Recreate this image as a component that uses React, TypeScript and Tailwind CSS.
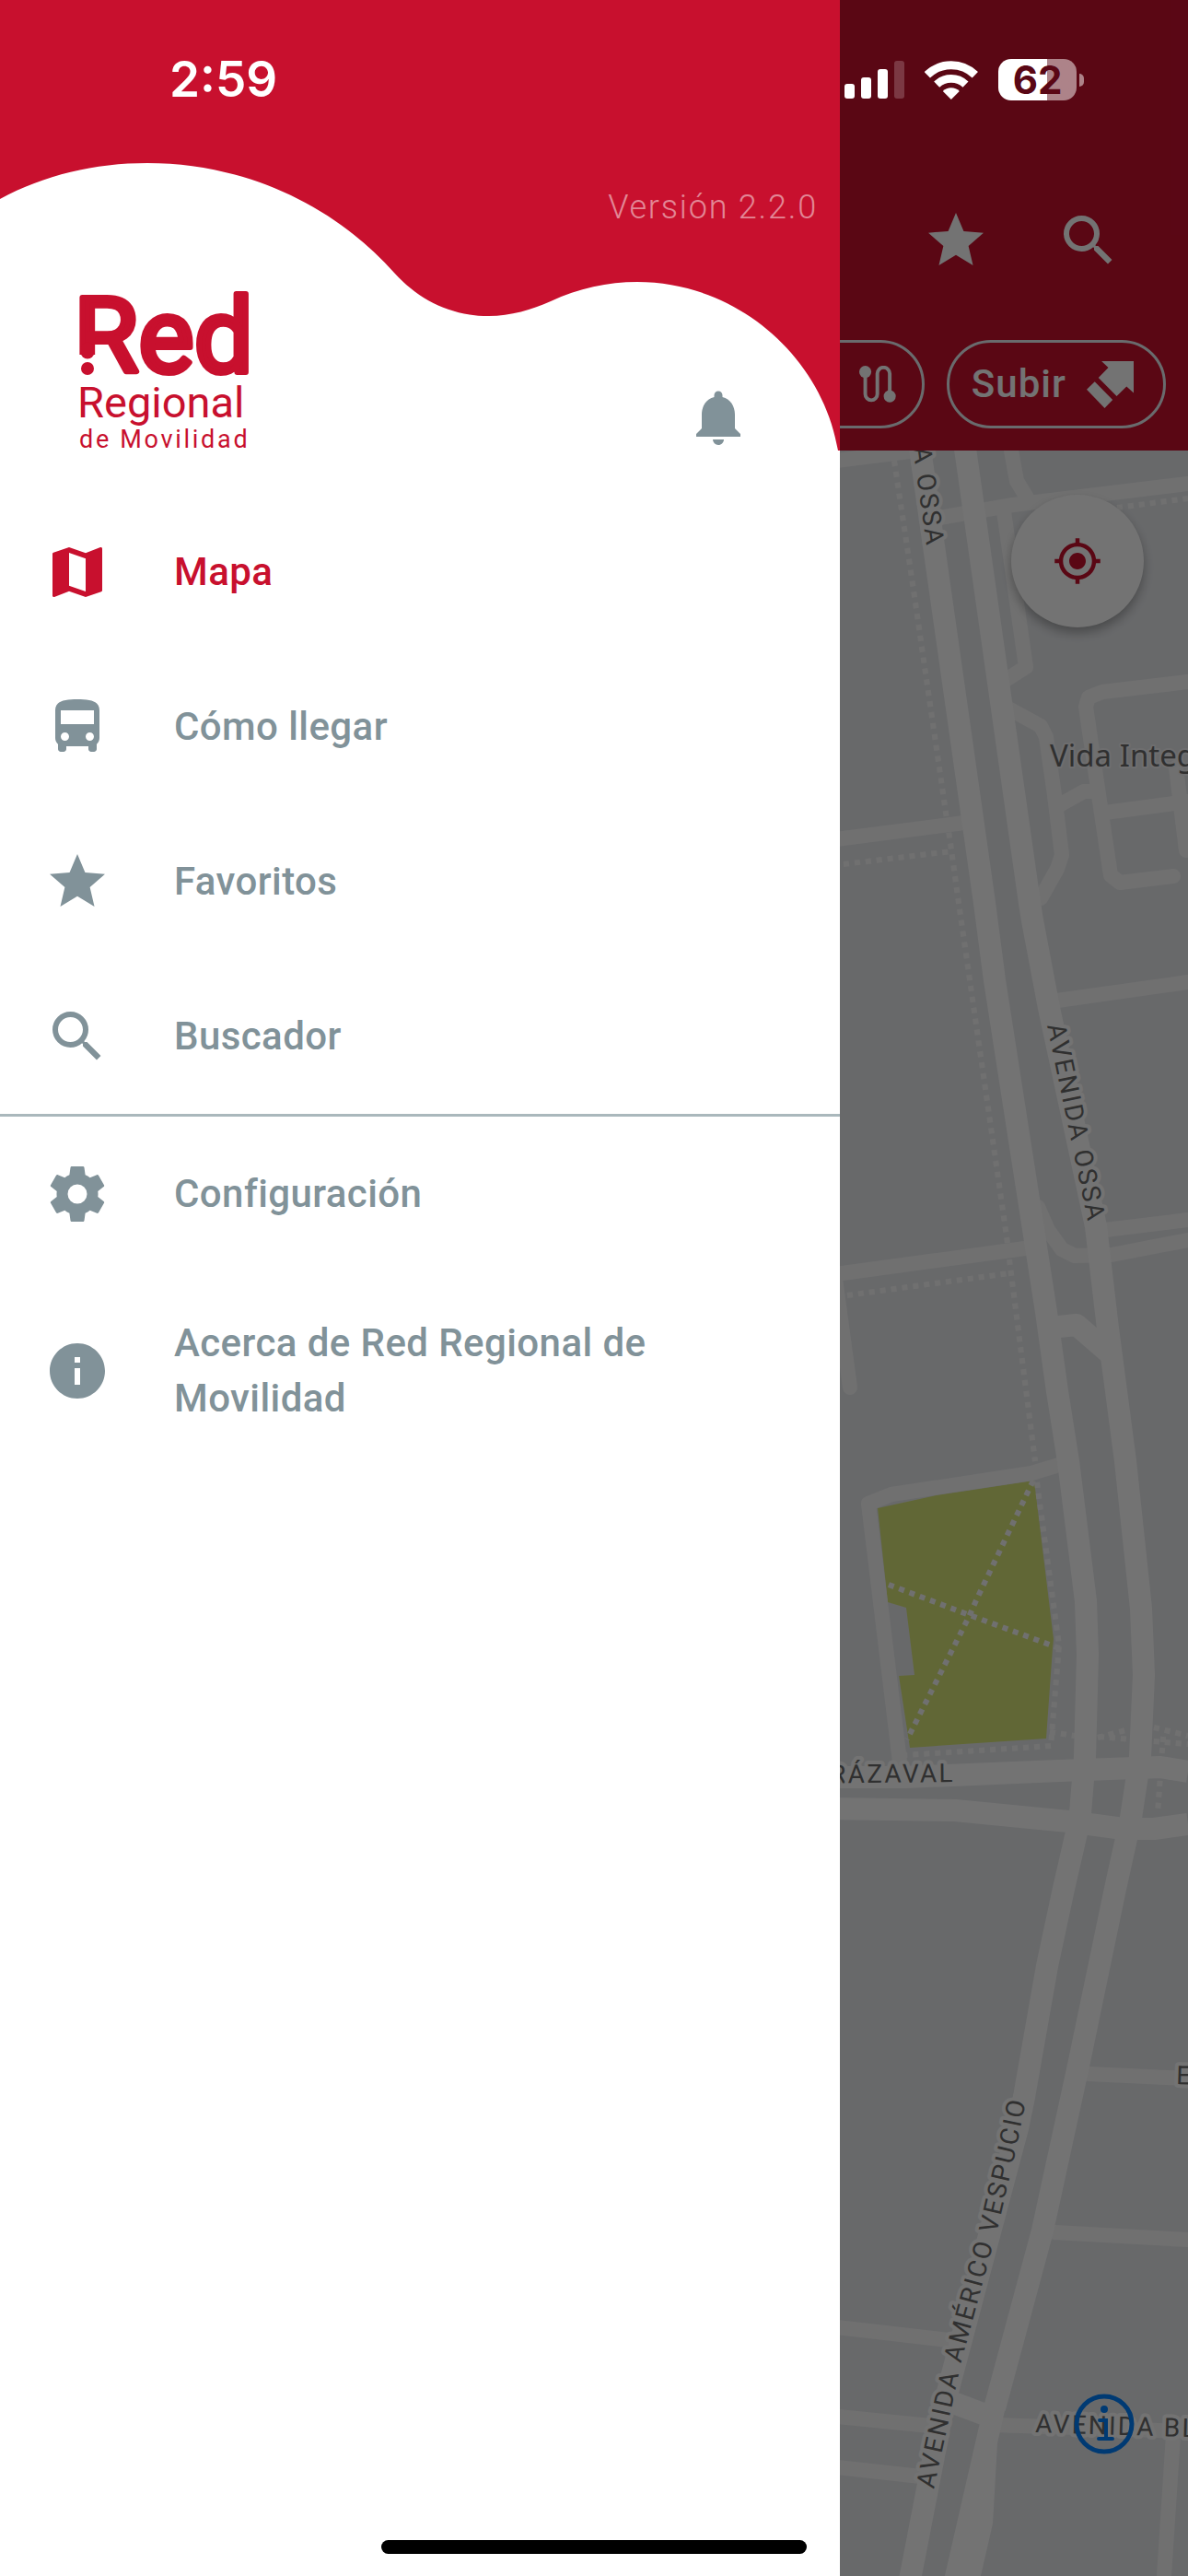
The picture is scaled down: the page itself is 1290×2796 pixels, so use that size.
/**
 * Navigation drawer of the transit app, opened over the dimmed map screen
 */

import type { ComponentType } from "react";
import clsx from "clsx";
import {
  MdDirectionsBus,
  MdInfo,
  MdMap,
  MdMyLocation,
  MdNotifications,
  MdSearch,
  MdStar,
} from "react-icons/md";

interface IconProps {
  className?: string;
}

interface MenuItem {
  id: string;
  label: string;
  icon: ComponentType<IconProps>;
  active?: boolean;
}

function CogIcon({ className }: IconProps) {
  return (
    <svg viewBox="0 0 24 24" fill="currentColor" className={className} aria-hidden="true">
      <path d="M12 15.5A3.5 3.5 0 0 1 8.5 12 3.5 3.5 0 0 1 12 8.5a3.5 3.5 0 0 1 3.5 3.5 3.5 3.5 0 0 1-3.5 3.5m7.43-2.53c.04-.32.07-.64.07-.97s-.03-.66-.07-1l2.11-1.63c.19-.15.24-.42.12-.64l-2-3.46c-.12-.22-.39-.31-.61-.22l-2.49 1c-.52-.39-1.06-.73-1.69-.98l-.37-2.65A.506.506 0 0 0 14 2h-4c-.25 0-.46.18-.5.42l-.37 2.65c-.63.25-1.17.59-1.69.98l-2.49-1c-.22-.09-.49 0-.61.22l-2 3.46c-.13.22-.07.49.12.64L4.57 11c-.04.34-.07.67-.07 1s.03.65.07.97l-2.11 1.66c-.19.15-.25.42-.12.64l2 3.46c.12.22.39.3.61.22l2.49-1.01c.52.4 1.06.74 1.69.99l.37 2.65c.04.24.25.42.5.42h4c.25 0 .46-.18.5-.42l.37-2.65c.63-.26 1.17-.59 1.69-.99l2.49 1.01c.22.08.49 0 .61-.22l2-3.46c.12-.22.07-.49-.12-.64z" />
    </svg>
  );
}

function RouteIcon({ className }: IconProps) {
  return (
    <svg viewBox="0 0 122 122" className={className} aria-hidden="true">
      <path
        d="M20 20V94a20 20 0 0 0 40 0V26a20 20 0 0 1 41 0V100"
        fill="none"
        stroke="currentColor"
        strokeWidth="12"
      />
      <circle cx="20" cy="20" r="20" fill="currentColor" />
      <circle cx="101" cy="101" r="20" fill="currentColor" />
    </svg>
  );
}

function BoardIcon({ className }: IconProps) {
  return (
    <svg viewBox="0 0 152 152" fill="currentColor" className={className} aria-hidden="true">
      <path d="M48 0H152V103L129 82 97 113 38 54 70 21Z" />
      <path d="M26 66 84 125 58 152 0 92Z" />
    </svg>
  );
}

const mainItems: MenuItem[] = [
  { id: "mapa", label: "Mapa", icon: MdMap, active: true },
  { id: "como-llegar", label: "Cómo llegar", icon: MdDirectionsBus },
  { id: "favoritos", label: "Favoritos", icon: MdStar },
  { id: "buscador", label: "Buscador", icon: MdSearch },
];

const secondaryItems: MenuItem[] = [
  { id: "configuracion", label: "Configuración", icon: CogIcon },
  { id: "acerca", label: "Acerca de Red Regional de Movilidad", icon: MdInfo },
];

// Map geometry, widest roads last so they cover the junctions
const minorRoads = [
  "M900 501 995 489",
  "M1020 562 1100 548 1290 525",
  "M1097 480 1098 489 1104 522 1118 545",
  "M1090 555 1114 724 1092 738",
  "M1095 769 1130 788 1136 800 1145 863 1153 928 1148 943 1130 975",
  "M1290 740 1197 751 1182 757 1179 767 1196 883 1206 950 1216 958 1274 951",
  "M1150 874 1177 859 1192 859",
  "M1200 882 1290 870",
  "M1277 833 1288 923",
  "M900 912 1047 893",
  "M1148 1086 1290 1066",
  "M1200 1335 1290 1324",
  "M1290 1346 1207 1362 1167 1363 1153 1356 1138 1335 1127 1310",
  "M900 1384 1113 1355",
  "M906 1380 923 1506",
  "M1150 1590 1120 1599 968 1622 943 1632 977 1912",
  "M1182 2251 1290 2256",
  "M1145 2423 1290 2431",
  "M900 2525 1030 2540",
  "M900 2622 1010 2633",
  "M900 2677 1000 2688",
  "M1080 2632 1290 2639",
  "M1274 2643 1264 2796",
];

const footpaths = [
  "M971 500 990 627 1026 875 1032 915 1041 980 1093 1342 1097 1375 1124 1586",
  "M916 938 1033 924",
  "M1213 551 1290 541",
  "M920 1406 1096 1382",
  "M1126 1609 1150 1786 1141 1895 983 1905",
  "M1122 1607 1060 1737 1052 1755 985 1888",
  "M965 1720 1050 1752 1153 1790",
  "M1140 1880 1167 1884",
  "M1192 1886 1222 1878",
  "M1193 1885 1290 1893",
  "M1253 1875 1290 1884",
  "M1263 1885 1257 1968",
];

const avenues = [
  "M998 480 1069 980 1080 1064 1136 1424 1148 1510 1160 1586 1179 1738 1181 1796 1178 1907 1173 1968 1169 1989 1155 2050 1137 2134 1112 2276 1105 2310 1030 2592 1023 2619 988 2800",
  "M1047 480 1118 980 1121 999 1139 1094 1190 1331 1203 1442 1212 1510 1222 1586 1239 1746 1242 1818 1238 1907 1228 1973 1211 2050 1171 2242 1132 2421 1080 2614",
  "M900 1929 983 1929 1150 1922 1260 1918 1290 1923",
  "M900 1963 1037 1965 1160 1977 1220 1985 1253 1985 1290 1980",
  "M1140 1441 1169 1438 1206 1470",
  "M1030 2606 1078 2624",
];

const streetLabels = [
  { id: "ossa-norte", d: "M976 377 1008 606", text: "AVENIDA OSSA" },
  { id: "ossa-sur", d: "M1137 1113 1185 1344", text: "AVENIDA OSSA" },
  { id: "irarrazaval", d: "M832 1936 1060 1934", text: "IRARRÁZAVAL" },
  {
    id: "vespucio",
    d: "M1014 2702 1044 2563 1084 2416 1104 2330 1122 2242",
    text: "AVENIDA AMÉRICO VESPUCIO",
  },
  { id: "blanco", d: "M1124 2640 1420 2649", text: "AVENIDA BLANCO" },
  { id: "este", d: "M1277 2262 1400 2266", text: "ESTE" },
];

function CityMap() {
  return (
    <svg
      viewBox="0 489 1290 2307"
      preserveAspectRatio="xMaxYMin slice"
      className="absolute inset-0 h-full w-full"
      fill="none"
      strokeLinejoin="round"
      role="img"
      aria-label="Mapa de la ciudad"
    >
      <path
        fill="#d7e578"
        d="M953 1637 1017 1623 1123 1607 1144 1779 1143 1789 1136 1887 988 1897 976 1819 993 1818 984 1745 964 1739Z"
      />
      <g stroke="#f9f9f9" strokeWidth="6" strokeDasharray="6 6">
        {footpaths.map((d) => (
          <path key={d} d={d} />
        ))}
      </g>
      <g stroke="#f9f9f9" strokeWidth="16" strokeLinecap="round">
        {minorRoads.map((d) => (
          <path key={d} d={d} />
        ))}
      </g>
      <g stroke="#ffffff" strokeWidth="24">
        {avenues.map((d) => (
          <path key={d} d={d} />
        ))}
      </g>
      <path fill="#ffffff" d="M1068 2612 1092 2612 1083 2652 1078 2739 1064 2800 1025 2800Z" />

      {/* Labels */}
      <g
        fill="#6b6b6b"
        stroke="#ffffff"
        strokeWidth="8"
        paintOrder="stroke"
        className="font-['Roboto',sans-serif] text-[28px] tracking-[0.08em]"
      >
        {streetLabels.map(({ id, d, text }) => (
          <g key={id}>
            <path id={id} d={d} stroke="none" fill="none" />
            <text>
              <textPath href={`#${id}`}>{text}</textPath>
            </text>
          </g>
        ))}
      </g>
      <text
        x="1140"
        y="832"
        fill="#6b6b6b"
        stroke="#f4f4f6"
        strokeWidth="4"
        paintOrder="stroke"
        className="font-['Noto_Sans',sans-serif] text-[33px]"
      >
        Vida Integral
      </text>
    </svg>
  );
}

function MapScreen() {
  return (
    <div className="flex min-h-screen flex-col">
      <header className="flex flex-col items-end bg-[#c8102e] pt-[225px] pb-6 text-white">
        <div className="flex gap-[72px] pr-[72px]">
          <button aria-label="Favoritos">
            <MdStar className="size-[72px]" />
          </button>
          <button aria-label="Buscar">
            <MdSearch className="size-[72px]" />
          </button>
        </div>
        <div className="mt-[72px] flex gap-6 pr-6 text-[42px] leading-[60px] font-medium tracking-wide">
          <button className="flex h-24 items-center gap-5 rounded-full border-[3px] border-[#e8edf1] px-7">
            Viaje
            <RouteIcon className="size-10" />
          </button>
          <button className="flex h-24 items-center gap-[22px] rounded-full border-[3px] border-[#e8edf1] pr-8 pl-6">
            Subir
            <BoardIcon className="size-[51px]" />
          </button>
        </div>
      </header>

      <main className="relative flex-1 overflow-hidden bg-[#e7e9ec]">
        <CityMap />
        <button
          aria-label="Mi ubicación"
          className="absolute top-12 right-12 flex size-36 items-center justify-center rounded-full bg-white text-[#c8102e] shadow-[0_6px_12px_rgba(0,0,0,0.3)]"
        >
          <MdMyLocation className="size-[54px]" />
        </button>
        <button aria-label="Información del mapa" className="absolute right-[58px] bottom-[132px]">
          <svg viewBox="0 0 66 66" className="size-[66px]" fill="none" stroke="#0080ff" aria-hidden="true">
            <circle cx="33" cy="33" r="30" strokeWidth="5" />
            <circle cx="33" cy="17" r="4" fill="#0080ff" stroke="none" />
            <path d="M28 29H35V49M27 49H42" strokeWidth="4" strokeLinecap="round" />
          </svg>
        </button>
      </main>
    </div>
  );
}

function Logo() {
  return (
    <svg
      viewBox="0 0 190 194"
      className="h-[194px] w-[190px] overflow-visible font-['Roboto',sans-serif]"
      fill="#c8102e"
      role="img"
      aria-label="Red Regional de Movilidad"
    >
      <text
        x="-7"
        y="109"
        stroke="#c8102e"
        strokeWidth="6"
        strokeLinejoin="round"
        className="text-[114px]"
      >
        Red
      </text>
      {/* Gap and dot at the foot of the R */}
      <path d="M-2 90H20V115H-2Z" fill="#ffffff" />
      <path d="M8 84V87" stroke="#c8102e" strokeWidth="15" strokeLinecap="round" />
      <circle cx="8" cy="105" r="7" />
      <text x="-3" y="158" className="text-[47px]">
        Regional
      </text>
      <text x="-1" y="191" className="text-[27px] tracking-widest">
        de Movilidad
      </text>
    </svg>
  );
}

function MenuRow({ item }: { item: MenuItem }) {
  const Icon = item.icon;

  return (
    <li>
      <a
        href={`#${item.id}`}
        aria-current={item.active ? "page" : undefined}
        className={clsx(
          "flex min-h-[168px] items-center gap-[69px] px-12 py-12",
          item.active ? "text-[#c8102e]" : "text-[#819299]"
        )}
      >
        <Icon className="size-[72px] shrink-0" />
        <span>{item.label}</span>
      </a>
    </li>
  );
}

function Drawer() {
  return (
    <aside className="absolute inset-y-0 left-0 w-[912px] max-w-[80%] bg-white">
      <div className="relative flex flex-col pt-[201px] pb-12">
        <svg viewBox="0 0 912 489" className="absolute inset-x-0 top-0 w-full" aria-hidden="true">
          <path
            fill="#c8102e"
            d="M0 216C48 190 103 177 160 177C265 177 362 222 428 296C455 326 490 343 531 343C554 343 578 336 598 327C628 313 660 306 692 306C800 306 893 387 910 489H912V0H0Z"
          />
        </svg>
        <p className="relative pr-6 text-right text-4xl leading-[48px] font-light tracking-wider text-white/50">
          Versión 2.2.0
        </p>
        <div className="relative mt-[46px] flex items-end justify-between pr-24 pl-[87px]">
          <Logo />
          <button aria-label="Notificaciones" className="text-[#819299]">
            <MdNotifications className="size-[72px]" />
          </button>
        </div>
      </div>

      <nav className="text-[42px] leading-[60px] font-medium tracking-[0.01em]">
        <ul>
          {mainItems.map((item) => (
            <MenuRow key={item.id} item={item} />
          ))}
        </ul>
        <ul className="border-t-[3px] border-[#aab8bc]">
          {secondaryItems.map((item) => (
            <MenuRow key={item.id} item={item} />
          ))}
        </ul>
      </nav>
    </aside>
  );
}

function StatusBar() {
  return (
    <div className="absolute inset-x-0 top-16 flex h-[45px] items-center justify-between pr-[113px] pl-[184px] font-['Inter',sans-serif] text-white">
      <span className="text-[53px] leading-none font-semibold">2:59</span>
      <div className="flex items-center gap-[22px]">
        <div className="flex h-[41px] items-end gap-[7px]">
          <span className="h-4 w-[11px] rounded-[3px] bg-white" />
          <span className="h-[23px] w-[11px] rounded-[3px] bg-white" />
          <span className="h-8 w-[11px] rounded-[3px] bg-white" />
          <span className="h-[41px] w-[11px] rounded-[3px] bg-white/20" />
        </div>
        <svg viewBox="311 195 173 126" className="h-[42px] w-[58px]" fill="none" aria-hidden="true">
          <path d="M319 241A112 112 0 0 1 475 241" stroke="#fff" strokeWidth="27" />
          <path d="M350 272A68 68 0 0 1 444 272" stroke="#fff" strokeWidth="26" />
          <path d="M397 321 370 294A38 38 0 0 1 424 294Z" fill="#fff" />
        </svg>
        <div className="flex items-center gap-[3px]">
          <div className="flex h-[45px] w-[85px] items-center justify-center rounded-[14px] bg-linear-to-r from-white from-62% to-[#ad8389] to-62% text-[42px] leading-none font-bold text-[#5a0715]">
            62
          </div>
          <span className="h-[14px] w-[5px] rounded-r-full bg-[#ad8389]" />
        </div>
      </div>
    </div>
  );
}

export default function App() {
  return (
    <div className="relative min-h-screen overflow-hidden font-['Roboto',sans-serif]">
      <MapScreen />
      <div className="absolute inset-0 bg-black/55" />
      <Drawer />
      <StatusBar />
      {/* Home indicator */}
      <div className="absolute inset-x-0 bottom-6 mx-auto h-[15px] w-[462px] rounded-full bg-black" />
    </div>
  );
}
